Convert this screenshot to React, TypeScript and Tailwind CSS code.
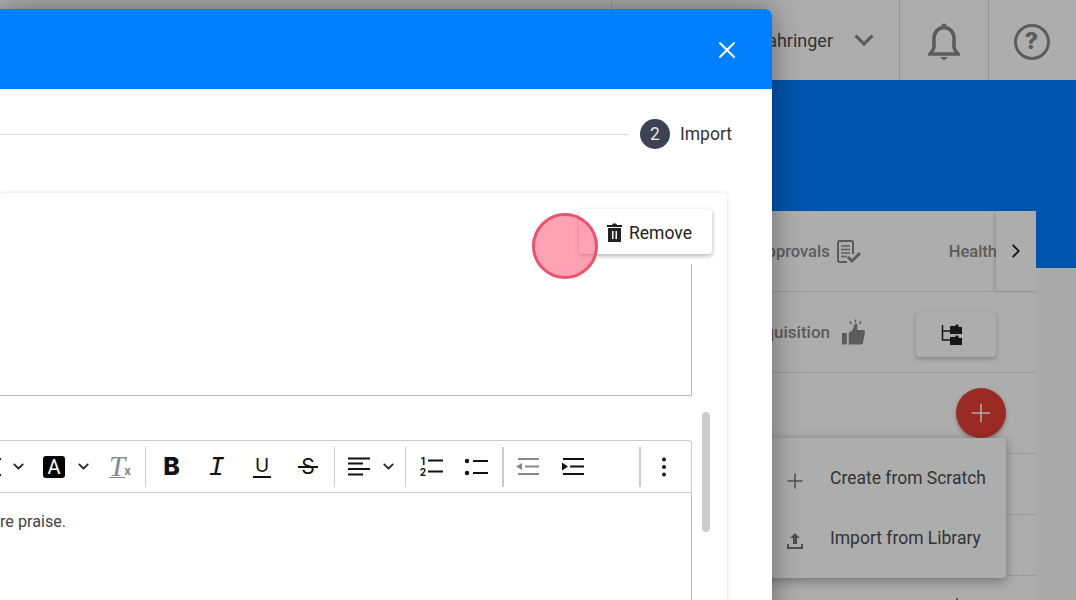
import { ChevronDown, ChevronRight, Plus, X } from "lucide-react";
import { MdKeyboardArrowDown } from "react-icons/md";

function Cell({ className = "w-[45px]", children }: { className?: string; children: React.ReactNode }) {
  return <div className={`flex shrink-0 items-center justify-center ${className}`}>{children}</div>;
}

function Sep({ className }: { className: string }) {
  return <div className={`h-10 shrink-0 bg-[#ccc] ${className}`} />;
}

function Caret({ className }: { className: string }) {
  return (
    <Cell className={`w-5 ${className}`}>
      <ChevronDown size={17} strokeWidth={2.5} className="text-[#222]" />
    </Cell>
  );
}

function ListLines({ dim }: { dim?: boolean }) {
  const color = dim ? "#888" : "#111";
  return (
    <>
      <path d="M2 2h21" stroke={color} strokeWidth="2" />
      <path d="M9 9.500h14" stroke={color} strokeWidth="2" />
      <path d="M2 17h21" stroke={color} strokeWidth="2" />
    </>
  );
}

function Toolbar() {
  return (
    <div className="-ml-[18px] flex h-[53px] w-[710px] items-center rounded-tr border-t border-r border-b border-[#ccc]">
      <Cell className="w-[30px]">
        <svg width="22" height="18" viewBox="0 0 22 18">
          <path d="M6 1h9M6 17h9M10.500 1v16" stroke="#111" strokeWidth="2" fill="none" />
        </svg>
      </Cell>
      <Caret className="-ml-1" />
      <Cell className="ml-[11px] w-[30px]">
        <span className="flex h-[22px] w-[22px] items-center justify-center rounded-[3px] bg-black text-[20px] leading-none text-white">A</span>
      </Cell>
      <Caret className="ml-1" />
      <Cell className="ml-1 w-[46px]">
        <span className="font-['Liberation_Serif',serif] text-[29px] leading-none text-[#888] italic underline decoration-1 underline-offset-1">T</span>
        <span className="mt-2 -ml-[1px] text-[13px] leading-none font-bold text-[#888]">x</span>
      </Cell>
      <Sep className="ml-[2px] w-px" />
      <Cell className="ml-[3px] w-[45px]">
        <span className="font-['Inter',sans-serif] text-[25px] leading-none font-extrabold text-[#111]">B</span>
      </Cell>
      <Cell className="w-[45px] pt-1">
        <span className="font-['Liberation_Mono',monospace] text-[27px] leading-none text-[#111] italic">I</span>
      </Cell>
      <Cell className="w-[46px]">
        <span className="border-b-2 border-[#111] px-[2px] pb-[1px] font-['Inter',sans-serif] text-[19px] leading-none text-[#111]">U</span>
      </Cell>
      <Cell className="relative w-[46px]">
        <span className="font-['Inter',sans-serif] text-[21px] leading-none text-[#111]">S</span>
        <span className="absolute top-1/2 left-[13px] h-[2px] w-5 -translate-y-1/2 bg-[#111]" />
      </Cell>
      <Sep className="ml-[3px] w-px" />
      <Cell className="ml-[9px] w-[30px]">
        <svg width="22" height="19" viewBox="0 0 22 19">
          <path d="M0 1.500h22M0 6.500h15M0 12h22M0 17.500h15" stroke="#111" strokeWidth="2" />
        </svg>
      </Cell>
      <Caret className="ml-1" />
      <Sep className="ml-[7px] w-px" />
      <Cell className="ml-[2px] w-[45px]">
        <div className="flex w-6 items-stretch">
          <div className="flex w-[9px] flex-col gap-[1px] text-center font-['Inter',sans-serif] text-[10px] leading-[10px] font-bold text-[#111]">
            <span>1</span>
            <span>2</span>
          </div>
          <svg width="15" height="21" viewBox="0 0 15 21">
            <path d="M0 4.500h15M0 15.500h15" stroke="#111" strokeWidth="2" />
          </svg>
        </div>
      </Cell>
      <Cell>
        <svg width="24" height="20" viewBox="0 0 24 20">
          <circle cx="3" cy="4" r="2.200" fill="#111" />
          <circle cx="3" cy="16" r="2.200" fill="#111" />
          <path d="M9 4h15M9 16h15" stroke="#111" strokeWidth="2" />
        </svg>
      </Cell>
      <Sep className="ml-[4px] w-[2px]" />
      <Cell className="ml-[1px] w-[45px]">
        <svg width="23" height="19" viewBox="0 0 23 19">
          <ListLines dim />
          <path d="M0 9.500l6-3.500v7z" fill="#888" />
        </svg>
      </Cell>
      <Cell>
        <svg width="23" height="19" viewBox="0 0 23 19">
          <ListLines />
          <path d="M7 9.500l-6-4v8z" fill="#111" />
        </svg>
      </Cell>
      <Sep className="ml-[44px] w-[2px]" />
      <Cell className="ml-[11px] w-6">
        <svg width="6" height="20" viewBox="0 0 6 20">
          <circle cx="3" cy="2.500" r="2" fill="#111" />
          <circle cx="3" cy="10" r="2" fill="#111" />
          <circle cx="3" cy="17.500" r="2" fill="#111" />
        </svg>
      </Cell>
    </div>
  );
}

function Modal() {
  return (
    <div className="absolute top-[9px] left-0 z-10 h-[700px] w-[772px] overflow-hidden rounded-tr-md bg-white shadow-[0_0_28px_rgba(0,0,0,0.4)]">
      <div className="flex h-20 items-center justify-end bg-[#0080ff] pt-[2px] pr-[31px]">
        <X size={28} strokeWidth={1.75} className="text-white" />
      </div>
      <div className="flex h-[90px] items-center pr-10">
        <div className="h-px flex-1 bg-[#ddd]" />
        <div className="ml-[11px] flex h-[30px] w-[30px] items-center justify-center rounded-full bg-[#3c4154] text-[17.5px] text-[#e6e7eb]">2</div>
        <span className="ml-[10px] text-[17.5px] text-[#333]">Import</span>
      </div>
      <div className="relative mt-[14px] w-[727px] rounded-sm shadow-[0_0_4px_rgba(0,0,0,0.14)]">
        <div className="h-[71px]">
          <div className="absolute top-4 right-[15px] z-10 flex h-[45px] w-[133px] items-center rounded bg-white pl-7 shadow-[0_2px_5px_rgba(0,0,0,0.3)]">
            <svg width="15" height="19" viewBox="0 0 15 19" className="mt-[2px]">
              <path d="M0 2h5l1-1.500h3L10 2h5v2H0z" fill="#222" />
              <path d="M1 5h13v14H1zM5 8v8h1.500V8zM8.500 8v8H10V8z" fill="#222" fillRule="evenodd" />
            </svg>
            <span className="ml-[7px] pt-[3px] text-[17.5px] text-[#222]">Remove</span>
          </div>
        </div>
        <div className="h-[132px] w-[692px] border-r border-b border-[#bbb]" />
        <div className="mt-[44px]">
          <Toolbar />
        </div>
        <div className="h-[300px] w-[692px] border-r border-[#bbb] pt-[17px] text-[16.2px] text-[#444]">re praise.</div>
        <div className="absolute top-[219px] left-[702px] h-[120px] w-2 rounded bg-[#ccc]" />
      </div>
    </div>
  );
}

function Background() {
  return (
    <div className="flex flex-col">
      <div className="ml-[611px] flex h-20 bg-white text-[#4d4d4d]">
        <div className="flex w-[288px] items-center justify-end border-l border-[#ddd] pr-[16px]">
          <span className="text-[18px]">ahringer</span>
          <MdKeyboardArrowDown size={38} className="ml-3 text-[#888]" />
        </div>
        <div className="flex w-[89px] items-center justify-center border-l border-[#ddd] pt-[3px]">
          <svg width="32" height="38" viewBox="0 0 32 38">
            <circle cx="16" cy="3" r="2.500" fill="#888" />
            <path d="M16 4.500c-6 0-10 5-10 11v8c0 3-2 5-4 7.500h28c-2-2.500-4-4.500-4-7.500v-8c0-6-4-11-10-11z" fill="none" stroke="#888" strokeWidth="3.600" />
            <path d="M12 34h8l-4 3.500z" fill="#888" />
          </svg>
        </div>
        <div className="flex w-[88px] items-center justify-center border-l border-[#ddd] pt-[3px] pr-[2px]">
          <div className="flex h-9 w-9 items-center justify-center rounded-full border-[3px] border-[#888] font-['Inter',sans-serif] text-[23px] leading-none font-extrabold text-[#888]">?</div>
        </div>
      </div>
      <div className="h-[188px] bg-[#007dff]" />
      <div className="h-[400px] bg-[#fbfbfb]">
        <div className="relative -mt-[57px] ml-[400px] w-[636px] bg-white font-medium text-[#888]">
          <div className="flex h-[81px] items-center border-b border-[#e4e4e4]">
            <div className="-mr-px flex flex-1 items-center justify-end pt-[2px]">
              <span className="text-[16.5px]">Approvals</span>
              <svg width="26" height="24" viewBox="0 0 26 24" className="ml-[6px]">
                <path d="M17 14V2.500a1.500 1.500 0 0 0-1.500-1.500h-12A1.500 1.500 0 0 0 2 2.500v18A1.500 1.500 0 0 0 3.500 22H11" fill="none" stroke="#888" strokeWidth="2" />
                <path d="M5 6h9M5 9.500h9M5 13h9M5 16.500h6" stroke="#888" strokeWidth="1.500" />
                <path d="M12 17l4 4 8-8" fill="none" stroke="#888" strokeWidth="3" />
              </svg>
              <span className="ml-[87px] text-[16.5px]">Health</span>
            </div>
            <div className="relative flex h-full w-10 items-center justify-center bg-white shadow-[-2px_0_3px_rgba(0,0,0,0.12)]">
              <ChevronRight size={22} strokeWidth={2} className="text-[#222]" />
            </div>
          </div>
          <div className="flex h-[81px] items-center justify-end border-b border-[#e4e4e4] pt-[2px] pr-10">
            <span className="text-[17px]">Acquisition</span>
            <svg width="23" height="26" viewBox="0 0 24 26" className="-mt-[2px] ml-3">
              <path d="M0 14h5v12H0z" fill="#888" />
              <path d="M7 14l4-3 2-6c1-1.500 3-1 3 1v5h6c1.500 0 2 1 2 2l-2 11c0 1-1 2-2 2H7z" fill="#888" />
              <path d="M14 0v3M8 2l2 2.500M20 2l-2 2.500" stroke="#888" strokeWidth="1.500" />
            </svg>
            <div className="mt-[2px] ml-[51px] flex h-[45px] w-20 items-center justify-center rounded bg-white pr-2 shadow-[0_2px_4px_rgba(0,0,0,0.25)]">
              <svg width="22" height="21" viewBox="0 0 22 21">
                <path d="M1.500 1v15h8M1.500 7h8" fill="none" stroke="#222" strokeWidth="1.500" />
                <path d="M9 2h5l1-1.500h2L18 3h3v7H9zM9 13h5l1-1.500h2l1 2.500h3v7H9z" fill="#222" />
              </svg>
            </div>
          </div>
          <div className="flex h-[81px] items-center justify-end border-b border-[#e4e4e4] pr-[30px]">
            <div className="flex h-[50px] w-[50px] items-center justify-center rounded-full bg-[#e63e36] shadow-[0_2px_4px_rgba(0,0,0,0.3)]">
              <Plus size={30} strokeWidth={1.25} className="text-white" />
            </div>
          </div>
          <div className="h-[61px] border-b border-[#e4e4e4]" />
          <div className="h-[61px] border-b border-[#e4e4e4]" />
          <div className="flex h-[61px] justify-end pt-[22px] pr-[78px]">
            <div className="h-[2px] w-[2px] bg-[#888]" />
          </div>
          <div className="absolute top-[227px] left-[200px] h-[140px] w-[406px] rounded bg-white py-[10px] pl-[183px] font-normal text-[#4d4d4d] shadow-[0_3px_12px_rgba(0,0,0,0.35)]">
            <div className="flex h-[60px] items-center">
              <Plus size={24} strokeWidth={1.5} className="mt-[5px] text-[#777]" />
              <span className="ml-[23px] text-[17.5px]">Create from Scratch</span>
            </div>
            <div className="flex h-[60px] items-center">
              <svg width="24" height="16" viewBox="-4 0 24 16" className="mt-[5px]">
                <path d="M8 0l5 5h-3v6H6V5H3z" fill="#777" />
                <path d="M0 11h2v3h12v-3h2v5H0z" fill="#777" />
              </svg>
              <span className="ml-[23px] text-[17.5px]">Import from Library</span>
            </div>
          </div>
        </div>
      </div>
    </div>
  );
}

export default function App() {
  return (
    <div className="relative h-[600px] w-[1076px] overflow-hidden bg-white font-['Roboto',sans-serif]">
      <Background />
      <div className="absolute inset-0 bg-black/[0.32]" />
      <Modal />
      <div className="absolute top-[213px] left-[532px] z-20 h-[66px] w-[66px] rounded-full border-[3px] border-[#f0506e] bg-[#ff6482]/60" />
    </div>
  );
}
